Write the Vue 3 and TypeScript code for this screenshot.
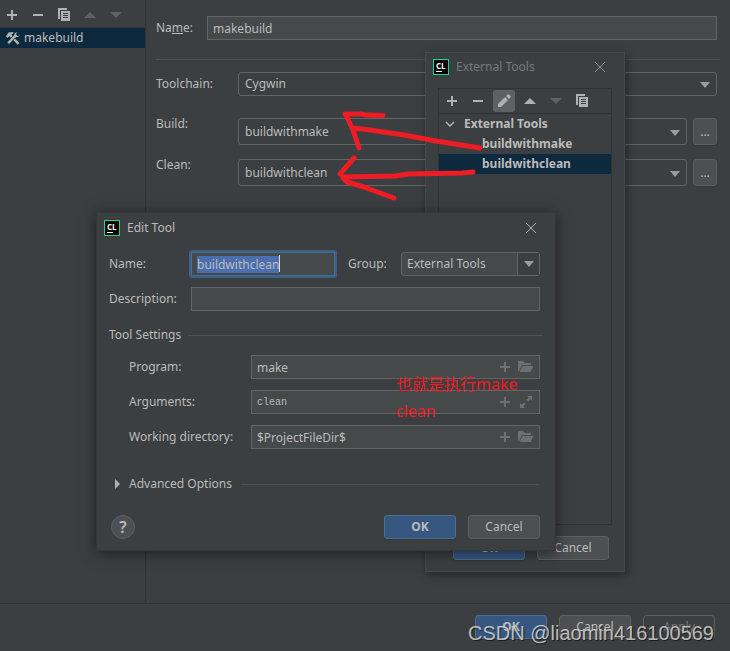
<script setup lang="ts">
import { onMounted, ref } from 'vue'

interface PathField {
  id: string
  label: string
  icon: 'folder' | 'expand'
  mono?: boolean
}

const targetName = ref('makebuild')
const toolName = ref('buildwithclean')
const description = ref('')
const nameInput = ref<HTMLInputElement | null>(null)

const fields: PathField[] = [
  { id: 'program', label: 'Program:', icon: 'folder' },
  { id: 'arguments', label: 'Arguments:', icon: 'expand', mono: true },
  { id: 'directory', label: 'Working directory:', icon: 'folder' },
]
const values = ref<Record<string, string>>({
  program: 'make',
  arguments: 'clean',
  directory: '$ProjectFileDir$',
})

const steps = [
  { id: 'build', label: 'Build:', value: 'buildwithmake' },
  { id: 'clean', label: 'Clean:', value: 'buildwithclean' },
]

const tools = ['buildwithmake', 'buildwithclean']
const selectedTool = ref('buildwithclean')

onMounted(() => {
  nameInput.value?.focus()
  nameInput.value?.select()
})
</script>

<template>
  <div class="window">
    <div class="content">
      <aside class="sidebar">
        <div class="toolbar">
          <button class="tool" aria-label="Add">
            <svg width="16" height="16" viewBox="0 0 16 16"><path d="M7 3h2v4h4v2H9v4H7V9H3V7h4z" /></svg>
          </button>
          <button class="tool" aria-label="Remove">
            <svg width="16" height="16" viewBox="0 0 16 16"><path d="M3 7h10v2H3z" /></svg>
          </button>
          <button class="tool" aria-label="Copy">
            <svg width="16" height="16" viewBox="0 0 16 16">
              <path d="M2 1h9v2H4v9H2z" />
              <path fill-rule="evenodd" d="M5 4h9v10H5zM7 6v1h5V6zm0 2v1h5V8zm0 2v1h5v-1z" />
            </svg>
          </button>
          <button class="tool" aria-label="Move up" disabled>
            <svg width="16" height="16" viewBox="0 0 16 16"><path d="M8 5l6 6H2z" /></svg>
          </button>
          <button class="tool" aria-label="Move down" disabled>
            <svg width="16" height="16" viewBox="0 0 16 16"><path d="M2 5h12l-6 6z" /></svg>
          </button>
        </div>
        <div class="target">
          <svg width="16" height="16" viewBox="0 0 16 16">
            <path d="M1 6.500L3.500 2.500 8 2l.6 1-2.200 1.600 1.200 1.300L14.500 13l-1.800 1.800L5.500 7.300 4.300 6.300 2.600 8z" />
            <path d="M14.800 4.300l-2 1.500-1.500-1.300L12.700 2c-2-.4-3.800.8-3.700 3L2 12.300 4 14.500l6.800-7c2.400.4 4.300-1 4-3.200z" stroke="#0d293e" stroke-width=".8" />
          </svg>
          <span>makebuild</span>
        </div>
      </aside>

      <main class="settings">
        <div class="name-row">
          <label for="target-name">Na<u>m</u>e:</label>
          <input id="target-name" v-model="targetName" class="field" type="text" />
        </div>
        <hr class="rule" />
        <div class="form">
          <div class="form-row toolchain">
            <label for="toolchain">Toolchain:</label>
            <div class="combo">
              <select id="toolchain"><option>Cygwin</option></select>
              <svg class="arrow" width="10" height="6" viewBox="0 0 10 6"><path d="M0 0h10L5 6z" /></svg>
            </div>
          </div>
          <div v-for="step in steps" :key="step.id" class="form-row step">
            <label :for="step.id">{{ step.label }}</label>
            <div class="combo">
              <select :id="step.id"><option>{{ step.value }}</option></select>
              <svg class="arrow" width="10" height="6" viewBox="0 0 10 6"><path d="M0 0h10L5 6z" /></svg>
            </div>
            <button class="more">...</button>
          </div>
        </div>
      </main>
    </div>

    <footer class="footer">
      <button class="btn primary">OK</button>
      <button class="btn">Cancel</button>
      <button class="btn" disabled>Apply</button>
    </footer>

    <section class="dialog external">
      <header class="title-bar muted">
        <span class="logo"><b>CL</b><i></i></span>
        <span class="title">External Tools</span>
        <button class="close" aria-label="Close">
          <svg width="12" height="12" viewBox="0 0 12 12"><path d="M1 1l10 10M11 1L1 11" /></svg>
        </button>
      </header>
      <div class="tree">
        <div class="toolbar">
          <button class="tool" aria-label="Add">
            <svg width="16" height="16" viewBox="0 0 16 16"><path d="M7 3h2v4h4v2H9v4H7V9H3V7h4z" /></svg>
          </button>
          <button class="tool" aria-label="Remove">
            <svg width="16" height="16" viewBox="0 0 16 16"><path d="M3 7h10v2H3z" /></svg>
          </button>
          <button class="tool active" aria-label="Edit">
            <svg width="16" height="16" viewBox="0 0 16 16"><path d="M2 14v-3l7-7 3 3-7 7zM10 3l1.500-1.500h1.500L14.500 3v1.500L13 6z" /></svg>
          </button>
          <button class="tool" aria-label="Move up">
            <svg width="16" height="16" viewBox="0 0 16 16"><path d="M8 5l6 6H2z" /></svg>
          </button>
          <button class="tool" aria-label="Move down" disabled>
            <svg width="16" height="16" viewBox="0 0 16 16"><path d="M2 5h12l-6 6z" /></svg>
          </button>
          <button class="tool" aria-label="Copy">
            <svg width="16" height="16" viewBox="0 0 16 16">
              <path d="M2 1h9v2H4v9H2z" />
              <path fill-rule="evenodd" d="M5 4h9v10H5zM7 6v1h5V6zm0 2v1h5V8zm0 2v1h5v-1z" />
            </svg>
          </button>
        </div>
        <div class="group">
          <svg width="10" height="6" viewBox="0 0 10 6"><path d="M1 1l4 4 4-4" /></svg>
          <span>External Tools</span>
        </div>
        <div
          v-for="tool in tools"
          :key="tool"
          class="leaf"
          :class="{ selected: tool === selectedTool }"
          @click="selectedTool = tool"
        >
          {{ tool }}
        </div>
      </div>
      <div class="actions">
        <button class="btn primary">OK</button>
        <button class="btn">Cancel</button>
      </div>
    </section>

    <section class="dialog edit">
      <header class="title-bar">
        <span class="logo"><b>CL</b><i></i></span>
        <span class="title">Edit Tool</span>
        <button class="close" aria-label="Close">
          <svg width="12" height="12" viewBox="0 0 12 12"><path d="M1 1l10 10M11 1L1 11" /></svg>
        </button>
      </header>
      <div class="edit-body">
        <div class="edit-row">
          <label class="short" for="tool-name">Name:</label>
          <div class="focused">
            <input id="tool-name" ref="nameInput" v-model="toolName" class="field" type="text" />
            <span class="caret"></span>
          </div>
          <label class="group-label" for="tool-group">Group:</label>
          <div class="combo editable">
            <select id="tool-group"><option>External Tools</option></select>
            <span class="drop"><svg width="10" height="6" viewBox="0 0 10 6"><path d="M0 0h10L5 6z" /></svg></span>
          </div>
        </div>
        <div class="edit-row">
          <label class="short" for="description">Description:</label>
          <input id="description" v-model="description" class="field" type="text" />
        </div>
        <div class="section">
          <span>Tool Settings</span>
          <hr class="rule" />
        </div>
        <div v-for="field in fields" :key="field.id" class="edit-row nested">
          <label :for="field.id">{{ field.label }}</label>
          <div class="path">
            <input :id="field.id" v-model="values[field.id]" class="field" :class="{ mono: field.mono }" type="text" />
            <div class="extras">
              <svg width="10" height="10" viewBox="0 0 10 10"><path d="M4 0h2v4h4v2H6v4H4V6H0V4h4z" /></svg>
              <svg v-if="field.icon === 'folder'" width="16" height="12" viewBox="0 0 16 12">
                <path d="M0 0h5l2 2h6v2H4L1 10H0z" />
                <path d="M4.500 5H15.500L12.500 11H1.500z" />
              </svg>
              <svg v-else width="16" height="12" viewBox="0 0 16 12">
                <path d="M9 0h5v5l-1.700-1.700L10 5.600 8.400 4l2.300-2.300z" />
                <path d="M2 7l1.700 1.700L6 6.400 7.600 8l-2.300 2.300L7 12H2z" />
              </svg>
            </div>
          </div>
        </div>
        <div class="section advanced">
          <svg width="5" height="10" viewBox="0 0 5 10"><path d="M0 0l5 5-5 5z" /></svg>
          <span>Advanced Options</span>
          <hr class="rule" />
        </div>
        <div class="edit-actions">
          <button class="help" aria-label="Help">?</button>
          <button class="btn primary">OK</button>
          <button class="btn">Cancel</button>
        </div>
      </div>
    </section>

    <svg class="strokes" width="150" height="100" viewBox="335 105 150 100">
      <path d="M345 114L362 114L365 115L383 115.500M346 115L353 130L359 148M353 128L370 130L404 135L436 141L480 148" />
      <path d="M354 158L340 174M343 177L395 176L408 174L462 173L473 172M343 178L347 182L364 187L380 193L394 198" />
    </svg>
    <p class="note">也就是执行make<br />clean</p>
    <div class="watermark">CSDN @liaomin416100569</div>
  </div>
</template>

<style>
body {
  margin: 0;
  background: #3c3f41;
}
</style>

<style scoped>
.window {
  position: relative;
  display: flex;
  flex-direction: column;
  min-height: 100vh;
  overflow: hidden;
  background: #3c3f41;
  color: #bbbbbb;
  font: 12px/20px "Noto Sans", "Noto Sans CJK SC", sans-serif;
}
.window * {
  box-sizing: border-box;
}
svg {
  display: block;
  flex: none;
  fill: #afb1b3;
}
button,
input,
select {
  margin: 0;
  color: inherit;
  font: inherit;
}
.content {
  display: flex;
  flex: 1;
}
.sidebar {
  width: 146px;
  border-right: 1px solid #323232;
}
.toolbar {
  display: flex;
  align-items: center;
  gap: 4px;
  padding: 2px;
}
.sidebar .toolbar {
  height: 28px;
  padding: 4px 1px 2px;
  border-bottom: 1px solid #353739;
}
.tool {
  display: flex;
  align-items: center;
  justify-content: center;
  width: 22px;
  height: 22px;
  padding: 0;
  border: 0;
  border-radius: 3px;
  background: none;
}
.tool:disabled {
  opacity: 0.3;
}
.tool.active {
  background: #5c6164;
}
.target {
  display: flex;
  align-items: center;
  gap: 3px;
  height: 20px;
  padding-left: 5px;
  background: #0d293e;
}
.settings {
  flex: 1;
  padding: 16px 10px 0;
}
.name-row {
  display: flex;
  align-items: center;
  padding-right: 3px;
}
.name-row label {
  width: 51px;
}
.field {
  flex: 1;
  width: 100%;
  min-width: 0;
  height: 24px;
  padding: 0 5px;
  border: 1px solid #646464;
  border-radius: 0;
  outline: 0;
  background: #45494a;
}
.rule {
  flex: 1;
  height: 1px;
  margin: 0;
  border: 0;
  background: #515151;
}
.name-row + .rule {
  margin-top: 19px;
}
.form {
  padding: 12px 3px 0 0;
}
.form-row {
  display: flex;
}
.form-row label {
  width: 82px;
}
.toolchain {
  align-items: center;
  margin-bottom: 22px;
}
.step {
  margin-bottom: 14px;
}
.step label {
  line-height: 12px;
}
.combo {
  position: relative;
  flex: 1;
  height: 24px;
}
.combo select {
  width: 100%;
  height: 100%;
  padding: 0 6px;
  border: 1px solid #646464;
  border-radius: 3px;
  outline: 0;
  appearance: none;
  background: #3c3f41;
}
.step .combo,
.more {
  height: 27px;
}
.arrow,
.drop svg {
  fill: #9a9c9e;
}
.arrow {
  position: absolute;
  top: 50%;
  right: 7px;
  margin-top: -2px;
}
.more {
  width: 24px;
  margin-left: 6px;
  padding: 0;
  border: 1px solid #5e6060;
  border-radius: 3px;
  background: #4c5052;
  box-shadow: 0 1px 1px #35383a;
}
.footer {
  display: flex;
  justify-content: flex-end;
  gap: 12px;
  padding: 11px 15px 12px;
  border-top: 1px solid #323232;
}
.btn {
  width: 72px;
  height: 24px;
  padding: 0;
  border: 1px solid #5e6060;
  border-radius: 3px;
  background: #4c5052;
  box-shadow: 0 1px 1px #35383a;
}
.btn.primary {
  border-color: #4c708c;
  background: #365880;
  font-weight: 700;
}
.btn:disabled {
  background: #3c3f41;
  color: #777777;
}
.dialog {
  position: absolute;
  border: 1px solid #46494b;
  background: #3c3f41;
}
.external {
  top: 52px;
  left: 425px;
  width: 200px;
  box-shadow: 2px 3px 9px rgba(0, 0, 0, 0.4);
}
.edit {
  top: 212px;
  left: 96px;
  width: 460px;
  border-color: #343638;
  box-shadow: 0 2px 14px rgba(0, 0, 0, 0.55);
}
.title-bar {
  display: flex;
  align-items: center;
  height: 28px;
  padding: 0 18px 0 7px;
}
.title {
  flex: 1;
  margin-left: 7px;
}
.muted .title {
  color: #77797b;
}
.logo {
  display: flex;
  flex-direction: column;
  width: 16px;
  height: 16px;
  padding: 1px 2px;
  border: 1px solid #21d789;
  background: #000000;
  color: #ffffff;
}
.logo b {
  height: 9px;
  font: 700 8px/9px "Open Sans", sans-serif;
}
.logo i {
  width: 6px;
  height: 1px;
  margin-top: 1px;
  background: #ffffff;
}
.close {
  padding: 0;
  border: 0;
  background: none;
}
.close svg {
  fill: none;
  stroke: #afb1b3;
}
.muted .close svg {
  stroke: #8a8c8e;
}
.tree {
  height: 437px;
  margin: 7px 12px 0;
  border: 1px solid #323232;
  font-weight: 700;
}
.tree .toolbar {
  height: 25px;
  border-bottom: 1px solid #323232;
}
.group {
  display: flex;
  align-items: center;
  gap: 9px;
  height: 20px;
  padding-left: 6px;
}
.group svg {
  fill: none;
  stroke: #afb1b3;
  stroke-width: 1.5;
}
.leaf {
  height: 20px;
  padding-left: 43px;
}
.leaf.selected {
  background: #0d293e;
}
.actions {
  display: flex;
  justify-content: flex-end;
  gap: 12px;
  padding: 11px 15px;
}
.edit .title-bar {
  height: 30px;
}
.edit-body {
  padding: 9px 15px 11px 12px;
}
.edit-row {
  display: flex;
  align-items: center;
  margin-bottom: 11px;
}
.short {
  width: 82px;
}
.focused {
  position: relative;
  width: 144px;
  outline: 2px solid #3d6185;
  border-radius: 1px;
}
.focused .field {
  display: block;
  border-color: #466d94;
}
.focused .field::selection {
  background: #4b6eaf;
  color: #bbbbbb;
}
.caret {
  position: absolute;
  top: 3px;
  left: 88px;
  width: 1px;
  height: 17px;
  background: #dddddd;
}
.group-label {
  width: 66px;
  padding-left: 13px;
}
.editable select {
  padding: 0 5px;
  background: #45494a;
}
.drop {
  position: absolute;
  top: 1px;
  right: 1px;
  bottom: 1px;
  display: flex;
  align-items: center;
  justify-content: center;
  width: 22px;
  border-left: 1px solid #646464;
  background: #3c3f41;
  pointer-events: none;
}
.section {
  display: flex;
  align-items: center;
  gap: 7px;
  margin: 14px -3px 10px 0;
}
.nested {
  padding-left: 20px;
}
.nested label {
  width: 122px;
}
.path {
  position: relative;
  flex: 1;
}
.path .field {
  display: block;
}
.mono {
  font: 10px/20px "Liberation Mono", monospace;
}
.extras {
  position: absolute;
  top: 0;
  right: 6px;
  bottom: 0;
  display: flex;
  align-items: center;
  gap: 8px;
}
.extras svg {
  fill: #6b7072;
}
.advanced {
  gap: 9px;
  margin: 25px 1px 21px 6px;
}
.edit-actions {
  display: flex;
  align-items: center;
  gap: 12px;
}
.help {
  width: 24px;
  height: 24px;
  margin: 0 auto 0 2px;
  padding: 0;
  border: 1px solid #5e6060;
  border-radius: 50%;
  background: #4c5052;
  font-size: 16px;
  font-weight: 600;
  line-height: 20px;
}
.strokes {
  position: absolute;
  top: 105px;
  left: 335px;
  fill: none;
  stroke: #ee1c24;
  stroke-width: 5;
  stroke-linecap: round;
  stroke-linejoin: round;
  pointer-events: none;
}
.note {
  position: absolute;
  top: 371px;
  left: 396px;
  margin: 0;
  color: #ee1c24;
  font-size: 16px;
  line-height: 27px;
  white-space: nowrap;
  pointer-events: none;
}
.watermark {
  position: absolute;
  right: 16px;
  bottom: 6px;
  color: rgba(225, 225, 225, 0.8);
  font: 20px/24px "Liberation Sans", sans-serif;
  text-shadow: 1px 1px 1px rgba(0, 0, 0, 0.6);
  white-space: nowrap;
  pointer-events: none;
}
</style>
